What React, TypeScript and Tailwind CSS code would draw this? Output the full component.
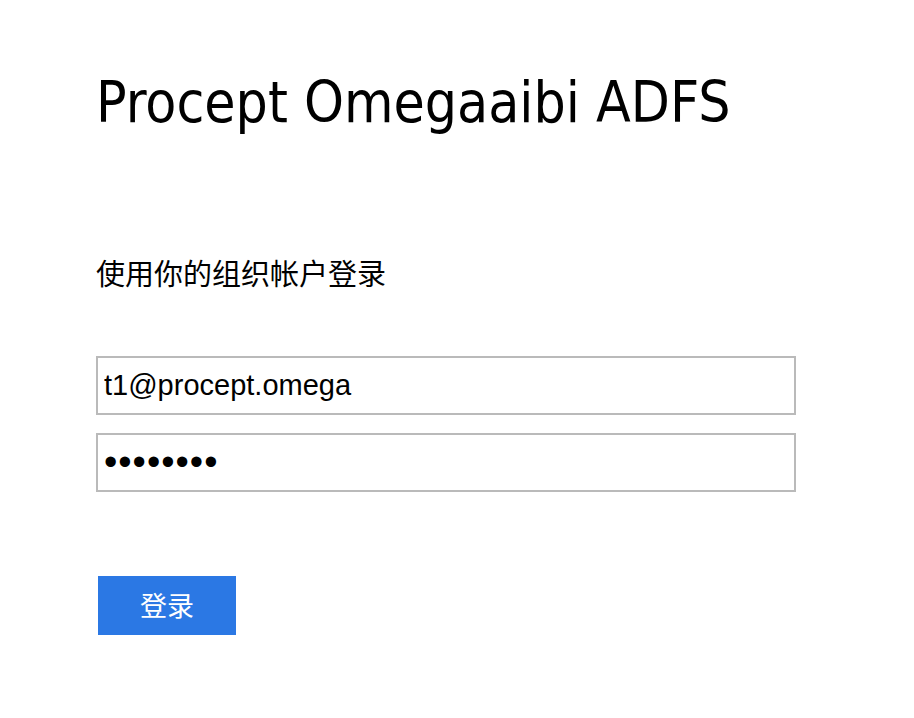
import React from 'react';

export default function App() {
  return (
    <div className="min-h-screen bg-white px-[96px] pt-[70px]">
      <h1 className="font-['DejaVu_Sans_Condensed',sans-serif] text-[56.5px] leading-[66px] text-black">
        Procept Omegaaibi ADFS
      </h1>

      <p className="mt-[116px] font-['Noto_Sans_CJK_SC',sans-serif] text-[29px] leading-[40px] text-black">
        使用你的组织帐户登录
      </p>

      <form className="mt-[64px] w-[700px] flex flex-col gap-[18px]">
        <input
          type="email"
          defaultValue="t1@procept.omega"
          className="h-[59px] w-full border-2 border-[#bababa] px-[6px] font-['Liberation_Sans',sans-serif] text-[29px] text-black outline-none"
        />
        <input
          type="password"
          defaultValue="12345678"
          className="h-[59px] w-full border-2 border-[#bababa] px-[6px] font-['Liberation_Sans',sans-serif] text-[38px] tracking-[1px] text-black outline-none"
        />
        <button
          type="button"
          className="mt-[66px] ml-[2px] h-[59px] w-[138px] bg-[#2b78e4] font-['Noto_Sans_CJK_SC',sans-serif] text-[27px] text-white"
        >
          登录
        </button>
      </form>
    </div>
  );
}
